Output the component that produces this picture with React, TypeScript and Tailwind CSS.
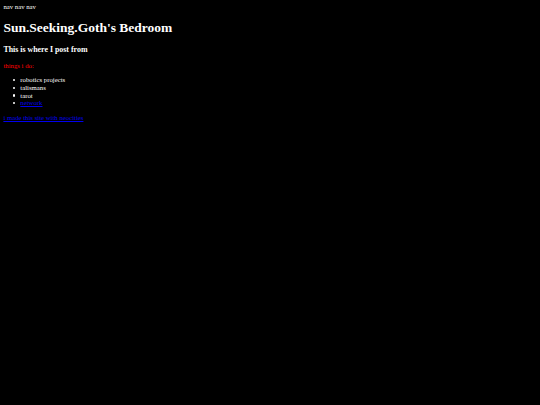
const items = ['robotics projects', 'talismans', 'tarot'];

function Bullet() {
  return <span className="w-[2.2px] h-[2.2px] shrink-0 rounded-full bg-white" />;
}

export default function App() {
  return (
    <div className="min-h-[405px] bg-black p-[3.375px] text-white text-[6.75px] leading-[1.15] font-['Liberation_Serif',serif]">
      <nav>nav nav nav</nav>
      <h1 className="my-[9.05px] text-[13.5px] font-bold">Sun.Seeking.Goth's Bedroom</h1>
      <h3 className="my-[7.9px] text-[7.9px] font-bold">This is where I post from</h3>
      <p className="my-[6.75px] text-[#ff0000]">things i do:</p>
      <ul className="my-[6.75px] pl-[9.8px]">
        {items.map((item) => (
          <li key={item} className="flex items-center gap-[5px]">
            <Bullet />
            <span>{item}</span>
          </li>
        ))}
        <li className="flex items-center gap-[5px]">
          <Bullet />
          <a href="#" className="text-[#0000ee] underline">network</a>
        </li>
      </ul>
      <p className="my-[6.75px]">
        <a href="#" className="text-[#0000ee] underline">i made this site with neocities</a>
      </p>
    </div>
  );
}
